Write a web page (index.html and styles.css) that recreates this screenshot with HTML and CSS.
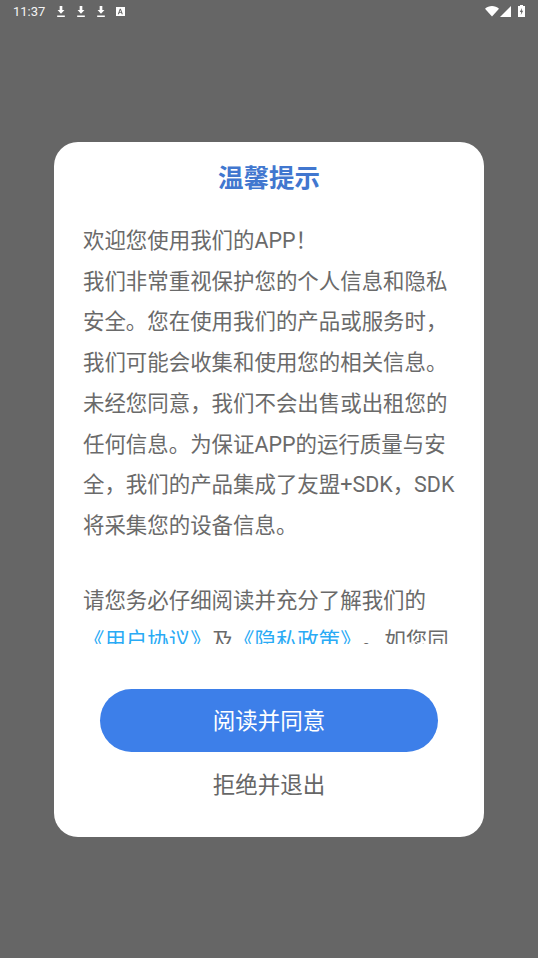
FILE: index.html
```html
<!DOCTYPE html>
<html lang="zh-CN">
<head>
<meta charset="utf-8">
<title>温馨提示</title>
<link rel="stylesheet" href="styles.css">
</head>
<body>
<div class="screen">
  <header class="status">
    <div class="status-left">
      <span class="time">11:37</span>
      <svg class="dl" viewBox="1 0 8 11.500"><path d="M3.600 0h2.800v4.200h2.200L5 8 1.400 4.200h2.200zM1 10h8v1.500H1z" fill="#fff"/></svg>
      <svg class="dl" viewBox="1 0 8 11.500"><path d="M3.600 0h2.800v4.200h2.200L5 8 1.400 4.200h2.200zM1 10h8v1.500H1z" fill="#fff"/></svg>
      <svg class="dl" viewBox="1 0 8 11.500"><path d="M3.600 0h2.800v4.200h2.200L5 8 1.400 4.200h2.200zM1 10h8v1.500H1z" fill="#fff"/></svg>
      <svg class="app" viewBox="0 0 10 10"><path fill-rule="evenodd" d="M0 0h10v10H0zM4.200 2 2 8h1.300l.4-1.200h2.200L6.300 8h1.300L5.400 2zM4.800 3.400l.8 2.300H4z" fill="#fff"/></svg>
    </div>
    <div class="status-right">
      <svg class="wifi" viewBox="0 0 14 11"><path d="M0 2.800C3.800-.9 10.200-.9 14 2.800L7 10.500z" fill="#fff"/></svg>
      <svg class="signal" viewBox="0 0 11 11"><path d="M11 0v11H0z" fill="#fff"/></svg>
      <svg class="battery" viewBox="0 0 7 12"><path fill-rule="evenodd" d="M2 0h3v1h2v11H0V1h2zM4 3 1.800 7h1.400L2.800 10 5.200 5.800H3.800z" fill="#fff"/></svg>
    </div>
  </header>
  <main class="overlay">
    <section class="dialog">
      <h1 class="title">温馨提示</h1>
      <div class="body">
        <p class="para">欢迎您使用我们的APP！<br>我们非常重视保护您的个人信息和隐私<br>安全。您在使用我们的产品或服务时，<br>我们可能会收集和使用您的相关信息。<br>未经您同意，我们不会出售或出租您的<br>任何信息。为保证APP的运行质量与安<br>全，我们的产品集成了友盟+SDK，SDK<br>将采集您的设备信息。</p>
        <p class="para">请您务必仔细阅读并充分了解我们的<br><a class="link">《用户协议》</a>及<a class="link">《隐私政策》</a><span class="stop">。</span>如您同</p>
      </div>
      <button class="agree">阅读并同意</button>
      <button class="refuse">拒绝并退出</button>
    </section>
  </main>
</div>
</body>
</html>
```

FILE: styles.css
```css
* { box-sizing: border-box; margin: 0; padding: 0; }
html, body { width: 538px; height: 958px; overflow: hidden; }
body { background: #666; font-family: Roboto, "Noto Sans CJK SC", sans-serif; }
.screen { width: 538px; height: 958px; display: flex; flex-direction: column; }
.status { height: 22px; display: flex; justify-content: space-between; align-items: center; padding: 0 13px 0 13px; flex: none; }
.status-left, .status-right { display: flex; align-items: center; }
.time { color: #f4f4f4; font-size: 13px; font-weight: 400; width: 44px; }
.dl { width: 8px; height: 11px; margin-right: 12px; }
.app { width: 9px; height: 9px; margin-left: -1px; }
.wifi { width: 14px; height: 11px; margin-right: 1px; }
.signal { width: 11px; height: 11px; margin-right: 7px; }
.battery { width: 7px; height: 12px; }
.overlay { flex: 1; padding-top: 120px; padding-left: 54px; }
.dialog { width: 430px; height: 695px; background: #fff; border-radius: 24px; padding-top: 19px; display: flex; flex-direction: column; align-items: center; }
.title { font-size: 25.500px; line-height: 34px; font-weight: 700; color: #4177cf; }
.body { width: 430px; height: 423px; margin-top: 26px; padding: 0 20px 0 29px; overflow: hidden; font-size: 21.450px; line-height: 40.700px; color: #6a6a6a; flex: none; }
.para { white-space: nowrap; margin-bottom: 34px; }
.link { color: #29aaf5; }
.stop { margin: 0 1px 0 11px; }
.agree { width: 338px; height: 63px; margin-top: 45px; padding-bottom: 3px; flex: none; border: 0; border-radius: 32px; background: #3d7fe9; color: #fff; font: inherit; font-size: 22.500px; }
.refuse { margin-top: 16px; border: 0; background: none; color: #666; font: inherit; font-size: 22.500px; line-height: 34px; }
```
